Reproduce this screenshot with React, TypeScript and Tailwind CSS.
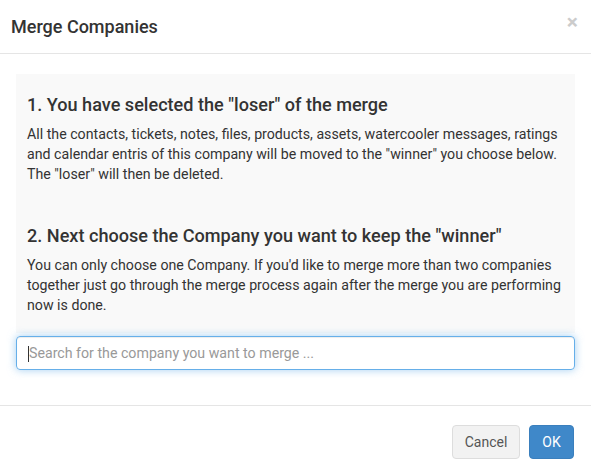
const App = () => (
    <div
        className="w-[591px] h-[475px] bg-white text-[#333] flex flex-col"
        style={{ fontFamily: "Roboto, 'Noto Sans', sans-serif" }}
    >
        <div className="flex items-center justify-between h-[54px] pl-[11px] pr-[13px] border-b border-[#e5e5e5]">
            <h4 className="text-[18px] font-medium leading-5 pt-[1px]">Merge Companies</h4>
            <button className="text-[21px] font-bold leading-none text-[#ccc] -mt-[8px]">×</button>
        </div>
        <div className="px-4 pt-5">
            <div className="bg-[#f9f9f9] pl-[11px] pr-3 pt-[21px] pb-[18px]">
                <h3 className="text-[18.1px] font-medium leading-5">
                    1. You have selected the "loser" of the merge
                </h3>
                <p className="mt-[9px] text-[14.2px] leading-5">
                    All the contacts, tickets, notes, files, products, assets, watercooler messages, ratings
                    and calendar entris of this company will be moved to the "winner" you choose below.
                    The "loser" will then be deleted.
                </p>
                <h3 className="mt-[42px] text-[18.1px] font-medium leading-5">
                    2. Next choose the Company you want to keep the "winner"
                </h3>
                <p className="mt-[9px] text-[14.2px] leading-5">
                    You can only choose one Company. If you'd like to merge more than two companies
                    together just go through the merge process again after the merge you are performing
                    now is done.
                </p>
            </div>
            <div className="relative mt-[3px]">
                <input
                    className="w-full h-[34px] px-3 text-[14.2px] rounded border border-[#66afe9] outline-none placeholder:text-[#999] shadow-[inset_0_1px_1px_rgba(0,0,0,0.075),0_0_8px_rgba(102,175,233,0.6)]"
                    placeholder="Search for the company you want to merge ..."
                />
                <span className="absolute left-[12px] top-[10px] w-px h-[16px] bg-[#333]" />
            </div>
        </div>
        <div className="mt-[35px] border-t border-[#e5e5e5] flex justify-end gap-[9px] pt-[19px] pr-[17px]">
            <button className="h-[34px] w-[68px] rounded border border-[#ddd] bg-[#f2f2f2] text-[14px] text-[#555]">
                Cancel
            </button>
            <button className="h-[34px] w-[45px] rounded border border-[#3a7fbd] bg-[#3f88c9] text-[14px] text-white">
                OK
            </button>
        </div>
    </div>
);

export default App;
